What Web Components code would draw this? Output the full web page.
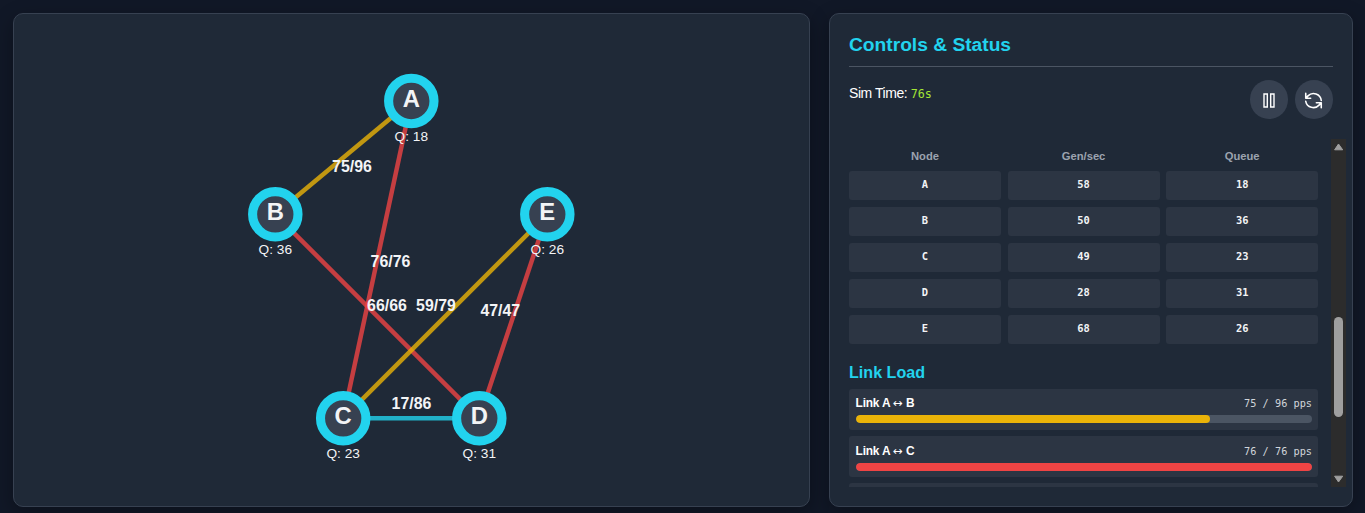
<!DOCTYPE html>
<html lang="en">
<head>
<meta charset="utf-8">
<title>Network Simulator</title>
<style>
html,body{margin:0;height:100%;overflow:hidden}
body{background:#111827;color:#f3f4f6;font-family:"Liberation Sans",Arial,sans-serif}
</style>
</head>
<body>
<sim-app></sim-app>
<script>
function define(name, html, setup) {
  customElements.define(name, class extends HTMLElement {
    connectedCallback() {
      if (this.shadowRoot) return;
      const root = this.attachShadow({ mode: 'open' });
      const t = document.createElement('template');
      t.innerHTML = typeof html === 'function' ? html(this) : html;
      root.append(t.content.cloneNode(true));
      if (setup) setup(this, root);
    }
  });
}

define('sim-panel', `<style>
:host{display:flex;flex-direction:column;box-sizing:border-box;min-width:0;background:#1f2937;border:1px solid #374151;border-radius:10px;box-shadow:0 6px 20px rgba(0,0,0,.3)}
</style><slot></slot>`);

define('network-graph', () => {
  const nodes = { A:[411.3,101,18], B:[275.3,214.3,36], C:[343.2,418.3,23], D:[479.3,418.3,31], E:[547.3,214.3,26] };
  const links = [
    ['A','B','75/96','#eab308',352,172], ['A','C','76/76','#ef4444',390.5,266.5],
    ['B','D','66/66','#ef4444',387,311], ['C','D','17/86','#22d3ee',411.5,409],
    ['C','E','59/79','#eab308',436,311], ['D','E','47/47','#ef4444',500.3,316]
  ];
  const lines = links.map(([a,b,,c]) => `<line x1="${nodes[a][0]}" y1="${nodes[a][1]}" x2="${nodes[b][0]}" y2="${nodes[b][1]}" stroke="${c}" stroke-width="4.5" opacity=".8"/>`).join('');
  const circles = Object.entries(nodes).map(([k,[x,y,q]]) => `<circle cx="${x}" cy="${y}" r="22.7" fill="#374151" stroke="#22d3ee" stroke-width="9.1"/><text class="n" x="${x}" y="${y+6}">${k}</text><text class="q" x="${x}" y="${y+39.7}">Q: ${q}</text>`).join('');
  const loads = links.map(l => `<text class="l" x="${l[4]}" y="${l[5]}">${l[2]}</text>`).join('');
  return `<style>
:host{display:block;flex:1;min-height:0}
svg{display:block;width:100%;height:100%}
text{text-anchor:middle;fill:#f3f4f6;font-family:"Liberation Sans",Arial,sans-serif}
.n{font-size:23.8px;font-weight:700}.q{font-size:13.7px}.l{font-size:15.9px;font-weight:700}
</style><svg viewBox="14 14 795 492" preserveAspectRatio="xMidYMid meet">${lines}${circles}${loads}</svg>`;
});

define('icon-button', `<style>
:host{display:flex;align-items:center;justify-content:center;box-sizing:border-box;padding-top:2px;width:38.4px;height:38.8px;border-radius:50%;background:#374151;color:#fff}
</style><slot></slot>`);

define('sim-header', `<style>
:host{display:block}
h2{margin:0;height:34px;padding-top:1px;line-height:22px;font-size:19.2px;font-weight:700;color:#22d3ee;border-bottom:1px solid #4b5563;box-sizing:border-box}
.row{display:flex;justify-content:space-between;align-items:flex-start;height:72px;padding-top:13px;box-sizing:border-box}
.time{font-size:14px;line-height:18px;padding-top:4px;color:#fff;letter-spacing:-.45px}
.time span{font:11.7px "DejaVu Sans Mono",monospace;color:#a3e635;letter-spacing:0}
.btns{display:flex;gap:6.4px}
svg{display:block;width:19px;height:19px;fill:none;stroke:currentColor;stroke-width:1.5;stroke-linecap:round;stroke-linejoin:round}
</style>
<h2>Controls &amp; Status</h2>
<div class="row"><div class="time">Sim Time: <span>76s</span></div>
<div class="btns">
<icon-button><svg viewBox="0 0 19 19"><path stroke-width="1.4" stroke-linejoin="miter" d="M4 3h3.3v13H4zM10.7 3H14v13h-3.3z"/></svg></icon-button>
<icon-button><svg viewBox="0 0 24 24"><path stroke-width="2" d="M2.2 3v6.2h6.2M2.2 9.2 5 6.2A9.8 9.8 0 0 1 21.8 12M21.8 21v-6.2h-6.2M21.8 14.8 19 17.8A9.8 9.8 0 0 1 2.2 13"/></svg></icon-button>
</div></div>`);

define('node-table', () => `<style>
:host{display:grid;grid-template-columns:repeat(3,152px);column-gap:6.6px;row-gap:7px}
b{display:flex;align-items:center;justify-content:center;font-size:11.2px;height:24px;padding-top:8px;box-sizing:border-box;color:#9ca3af}
span{display:flex;align-items:center;justify-content:center;height:29px;padding-bottom:3px;box-sizing:border-box;border-radius:3px;background:#2c3543;font:700 10.4px "DejaVu Sans Mono",monospace;color:#f3f4f6}
</style><b>Node</b><b>Gen/sec</b><b>Queue</b>` +
  [['A',58,18],['B',50,36],['C',49,23],['D',28,31],['E',68,26]].flat().map(v => `<span>${v}</span>`).join(''));

define('link-load', el => {
  const v = +el.getAttribute('value'), m = +el.getAttribute('max'), fill = el.getAttribute('fill');
  const box = `<style>
:host{display:block;flex:none;height:41px;box-sizing:border-box;padding:6px 6px 6px 6.6px;border-radius:3px;background:#2c3543}
:host([to="C"]){padding-top:7px}
.t{display:flex;justify-content:space-between;align-items:center;height:16px;margin-bottom:4px}
b{font-size:11.9px;letter-spacing:-.2px;color:#fff}
i{font:11.8px/12px "DejaVu Sans",sans-serif;letter-spacing:0}
.t span{font:10.25px "DejaVu Sans Mono",monospace;color:#d1d5db}
.bar{height:8px;border-radius:4px;background:#4b5563;overflow:hidden}
.fill{height:100%;border-radius:4px;width:${fill}%;background:${v / m > .9 ? '#ef4444' : '#eab308'}}
</style>`;
  return v ? box + `<div class="t"><b>Link ${el.getAttribute('from')} <i>↔</i> ${el.getAttribute('to')}</b><span>${v} / ${m} pps</span></div><div class="bar"><div class="fill"></div></div>` : box;
});

define('scroll-rail', `<style>
:host{display:flex;flex-direction:column;align-items:center;width:15px;background:#2c2c2c}
svg{display:block;width:10px;height:8px;fill:#9f9f9f;stroke:#9f9f9f;stroke-width:1;stroke-linejoin:round}
.up{margin-top:4px}.thumb{width:9px;height:100px;border-radius:5px;background:#9f9f9f;margin-top:166px}
.down{margin-top:auto;margin-bottom:4px}
</style><svg class="up" viewBox="0 0 10 8"><path d="M4.5 1 8.7 6.8H.6z"/></svg><div class="thumb"></div><svg class="down" viewBox="0 0 10 8"><path d="M4.5 7 8.7 1.2H.6z"/></svg>`);

define('status-scroller', `<style>
:host{display:flex;justify-content:space-between;height:348px;margin-right:-13px}
.content{width:469px;overflow:hidden;display:flex;flex-direction:column;padding-top:1px;box-sizing:border-box}
h3{flex:none;margin:17px 0 6px;height:22px;line-height:22px;font-size:16.1px;color:#22d3ee}
.list{display:flex;flex-direction:column;gap:6px}
node-table{flex:none}
</style><div class="content"><node-table></node-table><h3>Link Load</h3>
<div class="list"><link-load from="A" to="B" value="75" max="96" fill="77.6"></link-load><link-load from="A" to="C" value="76" max="76" fill="100"></link-load><link-load></link-load></div></div><scroll-rail></scroll-rail>`);

define('sim-app', `<style>
:host{display:grid;grid-template-columns:797px 524px;gap:19px;height:494px;padding:13px 12px 6px 13px}
.side{padding:19px}
</style><sim-panel><network-graph></network-graph></sim-panel><sim-panel class="side"><sim-header></sim-header><status-scroller></status-scroller></sim-panel>`);
</script>
</body>
</html>
